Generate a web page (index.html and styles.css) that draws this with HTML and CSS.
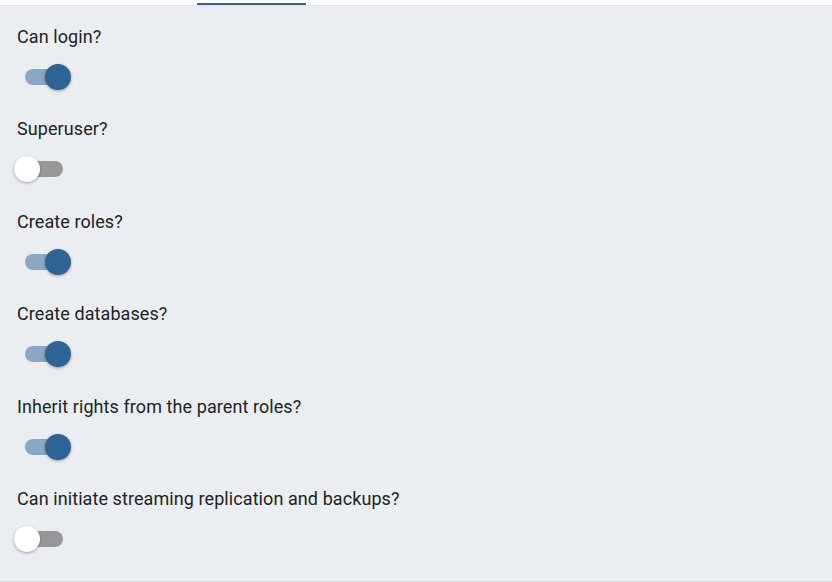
FILE: index.html
```html
<!DOCTYPE html>
<html>
<head>
<meta charset="utf-8">
<link rel="stylesheet" href="styles.css">
</head>
<body>
<div class="page">
  <div class="tabbar"><div class="indicator"></div></div>
  <div class="form">
    <div class="item">
      <div class="label">Can login?</div>
      <div class="control"><div class="switch on"><div class="track"></div><div class="thumb"></div></div></div>
    </div>
    <div class="item">
      <div class="label">Superuser?</div>
      <div class="control"><div class="switch"><div class="track"></div><div class="thumb"></div></div></div>
    </div>
    <div class="item">
      <div class="label">Create roles?</div>
      <div class="control"><div class="switch on"><div class="track"></div><div class="thumb"></div></div></div>
    </div>
    <div class="item">
      <div class="label">Create databases?</div>
      <div class="control"><div class="switch on"><div class="track"></div><div class="thumb"></div></div></div>
    </div>
    <div class="item">
      <div class="label">Inherit rights from the parent roles?</div>
      <div class="control"><div class="switch on"><div class="track"></div><div class="thumb"></div></div></div>
    </div>
    <div class="item">
      <div class="label">Can initiate streaming replication and backups?</div>
      <div class="control"><div class="switch"><div class="track"></div><div class="thumb"></div></div></div>
    </div>
  </div>
</div>
</body>
</html>
```
FILE: styles.css
```css
html, body {
  margin: 0;
  padding: 0;
}
body {
  width: 832px;
  height: 582px;
  overflow: hidden;
  background: #ffffff;
  font-family: Roboto, "Liberation Sans", sans-serif;
}
.page {
  height: 581px;
  background: #eaeef3;
  border-bottom: 1px solid #d6dade;
  display: flex;
  flex-direction: column;
}
.tabbar {
  height: 5px;
  background: #ffffff;
  border-bottom: 1px solid #dfe3e8;
  display: flex;
  align-items: flex-end;
  padding-left: 197px;
}
.indicator {
  width: 109px;
  height: 2px;
  background: #3c5f81;
}
.form {
  padding: 19px 0 0 17px;
  display: flex;
  flex-direction: column;
}
.item {
  display: flex;
  flex-direction: column;
  height: 92.4px;
}
.label {
  height: 24px;
  line-height: 24px;
  font-size: 18px;
  letter-spacing: 0.08px;
  color: #222222;
}
.control {
  height: 56px;
  display: flex;
  align-items: center;
  margin-left: -3px;
}
.switch {
  position: relative;
  width: 58px;
  height: 26px;
}
.track {
  position: absolute;
  left: 11px;
  top: 5px;
  width: 38px;
  height: 16px;
  border-radius: 8px;
  background: #979797;
}
.thumb {
  position: absolute;
  left: 0;
  top: 0;
  width: 26px;
  height: 26px;
  border-radius: 50%;
  background: #ffffff;
  box-shadow: 0 1px 3px rgba(0, 0, 0, 0.35);
}
.switch.on .track {
  background: #8ba7c2;
}
.switch.on .thumb {
  left: 31px;
  background: #2e6394;
}
```
